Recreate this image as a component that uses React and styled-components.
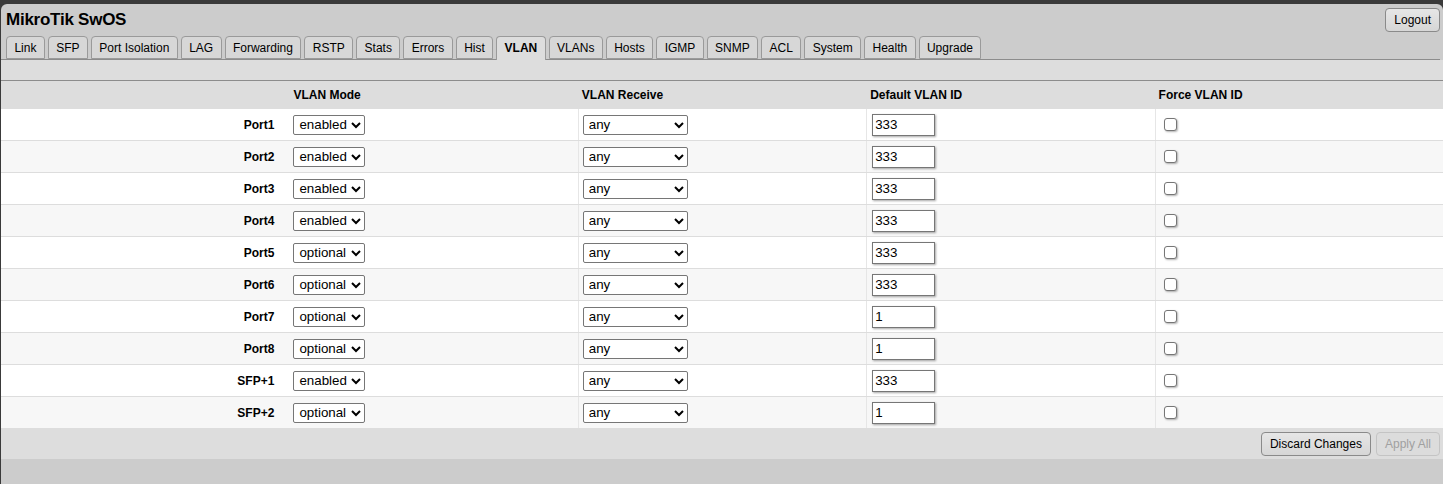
import React from "react";
import styled, { createGlobalStyle } from "styled-components";

const Global = createGlobalStyle`
  html, body { margin: 0; padding: 0; }
  body {
    background: #3a3a3a;
    font-family: "Liberation Sans", Arial, sans-serif;
    font-size: 12px;
    color: #000;
    overflow: hidden;
  }
`;

const Page = styled.div`
  margin: 4px 0 0 1px;
  background: #cccccc;
  border-radius: 6px 6px 0 0;
  min-height: calc(100vh - 4px);
  display: flex;
  flex-direction: column;
`;

const TopBar = styled.div`
  height: 32px;
  display: flex;
  justify-content: space-between;
  align-items: flex-start;
  padding: 0 3px 0 5px;
`;

const Title = styled.h1`
  margin: 6px 0 0 0;
  font-size: 17px;
  line-height: 20px;
  font-weight: bold;
  letter-spacing: -0.25px;
`;

const Button = styled.button`
  height: 24px;
  padding: 0 8px;
  font-family: "Liberation Sans", Arial, sans-serif;
  font-size: 12px;
  color: ${(p) => (p.disabled ? "#a0a0a0" : "#000")};
  background: ${(p) => (p.disabled ? "#dcdcdc" : "linear-gradient(#e6e6e6, #d6d6d6)")};
  border: 1px solid ${(p) => (p.disabled ? "#c4c4c4" : "#8a8a8a")};
  border-radius: 4px;
  margin-top: ${(p) => p.$top || 0}px;
`;

const TabBar = styled.div`
  display: flex;
  align-items: flex-end;
  gap: 3px;
  padding-left: 5px;
  margin-right: 3px;
  height: 23px;
  border-bottom: 1px solid #8c8c8c;
`;

const Tab = styled.div`
  height: ${(p) => (p.$active ? 24 : 23)}px;
  margin-bottom: ${(p) => (p.$active ? -1 : 0)}px;
  box-sizing: border-box;
  padding: 0 7.4px;
  line-height: 22px;
  border: 1px solid #9a9a9a;
  border-bottom: ${(p) => (p.$active ? "none" : "1px solid #9a9a9a")};
  border-radius: 4px 4px 0 0;
  background: ${(p) => (p.$active ? "#dddddd" : "#d7d7d7")};
  font-weight: ${(p) => (p.$active ? "bold" : "normal")};
  white-space: nowrap;
`;

const Strip = styled.div`
  height: 20px;
  background: #dddddd;
  border-bottom: 1px solid #8c8c8c;
`;

const Row = styled.div`
  display: grid;
  grid-template-columns: repeat(5, 1fr);
  height: ${(p) => (p.$head ? 28 : 31)}px;
  background: ${(p) => (p.$head ? "#dddddd" : p.$alt ? "#f7f7f7" : "#ffffff")};
  border-bottom: ${(p) => (p.$head || p.$last ? "none" : "1px solid #dddddd")};
  font-weight: ${(p) => (p.$head ? "bold" : "normal")};
`;

const Cell = styled.div`
  display: flex;
  align-items: center;
  justify-content: ${(p) => (p.$label ? "flex-end" : "flex-start")};
  padding: ${(p) => (p.$label ? "0 15px 0 0" : "0 0 0 4px")};
  border-left: ${(p) => (p.$divider ? "1px solid #e6e6e6" : "none")};
  font-weight: ${(p) => (p.$label ? "bold" : "inherit")};
  min-width: 0;
`;

const Select = styled.select`
  width: ${(p) => p.$w}px;
  height: 20px;
  font-family: "Liberation Sans", Arial, sans-serif;
  font-size: 13.33px;
  color: #000;
  background: #fff;
  border: 1px solid #767676;
  border-radius: 2px;
  padding: 0 0 0 1px;
  margin: 0;
`;

const TextInput = styled.input`
  box-sizing: border-box;
  width: 63px;
  height: 22px;
  margin: 0 0 0 1px;
  padding: 0 2px;
  font-family: "Liberation Sans", Arial, sans-serif;
  font-size: 13.33px;
  color: #000;
  background: #fff;
  border: 1px solid #767676;
  border-radius: 0;
  box-shadow: 1px 1px 2px rgba(0, 0, 0, 0.35);
  outline: none;
`;

const Check = styled.input`
  appearance: none;
  box-sizing: border-box;
  width: 13px;
  height: 13px;
  margin: -1px 0 0 4px;
  border: 1px solid #767676;
  border-radius: 3px;
  background: #fff;
  box-shadow: 1px 1px 2px rgba(0, 0, 0, 0.3);
`;

const Footer = styled.div`
  height: 31px;
  background: #dddddd;
  display: flex;
  justify-content: flex-end;
  align-items: center;
  gap: 5px;
  padding-right: 3px;
`;

const tabs = [
  "Link", "SFP", "Port Isolation", "LAG", "Forwarding", "RSTP", "Stats",
  "Errors", "Hist", "VLAN", "VLANs", "Hosts", "IGMP", "SNMP", "ACL",
  "System", "Health", "Upgrade",
];

const ports = [
  { name: "Port1", mode: "enabled", id: "333" },
  { name: "Port2", mode: "enabled", id: "333" },
  { name: "Port3", mode: "enabled", id: "333" },
  { name: "Port4", mode: "enabled", id: "333" },
  { name: "Port5", mode: "optional", id: "333" },
  { name: "Port6", mode: "optional", id: "333" },
  { name: "Port7", mode: "optional", id: "1" },
  { name: "Port8", mode: "optional", id: "1" },
  { name: "SFP+1", mode: "enabled", id: "333" },
  { name: "SFP+2", mode: "optional", id: "1" },
];

export default function App() {
  return (
    <>
      <Global />
      <Page>
        <TopBar>
          <Title>MikroTik SwOS</Title>
          <Button $top={4}>Logout</Button>
        </TopBar>
        <TabBar>
          {tabs.map((t) => (
            <Tab key={t} $active={t === "VLAN"}>{t}</Tab>
          ))}
        </TabBar>
        <Strip />
        <Row $head>
          <Cell />
          <Cell>VLAN Mode</Cell>
          <Cell>VLAN Receive</Cell>
          <Cell>Default VLAN ID</Cell>
          <Cell>Force VLAN ID</Cell>
        </Row>
        {ports.map((p, i) => (
          <Row key={p.name} $alt={i % 2 === 1} $last={i === ports.length - 1}>
            <Cell $label>{p.name}</Cell>
            <Cell>
              <Select $w={72} defaultValue={p.mode}>
                <option value="disabled">disabled</option>
                <option value="optional">optional</option>
                <option value="enabled">enabled</option>
                <option value="strict">strict</option>
              </Select>
            </Cell>
            <Cell $divider>
              <Select $w={105} defaultValue="any">
                <option value="any">any</option>
                <option value="only tagged">only tagged</option>
                <option value="only untagged">only untagged</option>
              </Select>
            </Cell>
            <Cell $divider>
              <TextInput type="text" defaultValue={p.id} />
            </Cell>
            <Cell $divider>
              <Check type="checkbox" />
            </Cell>
          </Row>
        ))}
        <Footer>
          <Button>Discard Changes</Button>
          <Button disabled>Apply All</Button>
        </Footer>
      </Page>
    </>
  );
}
